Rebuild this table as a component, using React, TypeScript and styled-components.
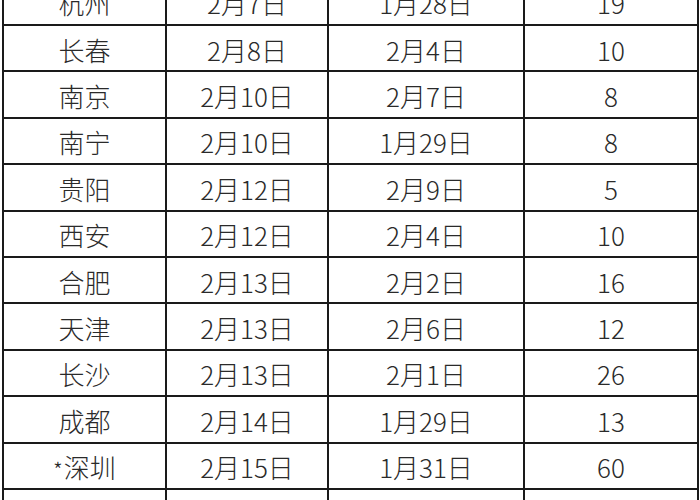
import React from 'react';
import styled, { createGlobalStyle } from 'styled-components';

const GlobalStyle = createGlobalStyle`
  html, body {
    margin: 0;
    padding: 0;
    background: #ffffff;
    overflow: hidden;
  }
  body {
    width: 700px;
    height: 500px;
  }
`;

const ROW_HEIGHT = 46.4;

const Sheet = styled.div`
  display: grid;
  grid-template-columns: 163px 162px 196px 174px;
  margin-top: -20.4px;
  margin-left: 2px;
  width: max-content;
  border-left: 2px solid #1a1a1a;
  font-family: 'Noto Sans CJK SC', 'Noto Sans', sans-serif;
  font-size: 26px;
  font-weight: 300;
  color: #2a2a2a;
`;

const Cell = styled.div`
  box-sizing: border-box;
  height: ${ROW_HEIGHT}px;
  display: flex;
  align-items: center;
  justify-content: center;
  padding-top: 3px;
  border-right: 2px solid #1a1a1a;
  border-bottom: 2px solid #1a1a1a;
  white-space: nowrap;
  line-height: 1;
`;

const Star = styled.span`
  font-size: 22px;
  transform: translateY(2px);
  margin-right: 1px;
`;

type Row = { city: string; starred?: boolean; start: string; prev: string; days: number };

const rows: Row[] = [
  { city: '杭州', start: '2月7日', prev: '1月28日', days: 19 },
  { city: '长春', start: '2月8日', prev: '2月4日', days: 10 },
  { city: '南京', start: '2月10日', prev: '2月7日', days: 8 },
  { city: '南宁', start: '2月10日', prev: '1月29日', days: 8 },
  { city: '贵阳', start: '2月12日', prev: '2月9日', days: 5 },
  { city: '西安', start: '2月12日', prev: '2月4日', days: 10 },
  { city: '合肥', start: '2月13日', prev: '2月2日', days: 16 },
  { city: '天津', start: '2月13日', prev: '2月6日', days: 12 },
  { city: '长沙', start: '2月13日', prev: '2月1日', days: 26 },
  { city: '成都', start: '2月14日', prev: '1月29日', days: 13 },
  { city: '深圳', starred: true, start: '2月15日', prev: '1月31日', days: 60 },
  { city: '广州', start: '2月16日', prev: '2月3日', days: 14 },
];

export default function App() {
  return (
    <>
      <GlobalStyle />
      <Sheet>
        {rows.map((r) => (
          <React.Fragment key={r.city}>
            <Cell>
              {r.starred && <Star>*</Star>}
              {r.city}
            </Cell>
            <Cell>{r.start}</Cell>
            <Cell>{r.prev}</Cell>
            <Cell>{r.days}</Cell>
          </React.Fragment>
        ))}
      </Sheet>
    </>
  );
}
